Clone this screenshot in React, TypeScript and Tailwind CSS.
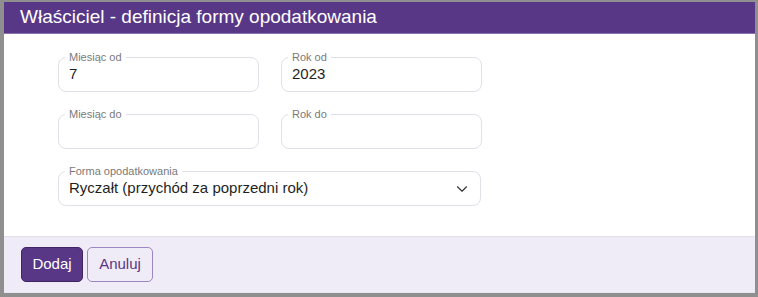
import { ChevronDown } from 'lucide-react';

function Field({ label, value }: { label: string; value?: string }) {
  return (
    <div className="relative h-[35px] w-[201px] rounded-lg border border-[#dfe1e6] bg-white">
      <span className="absolute -top-[8px] left-[6px] bg-white px-[4px] text-[11px] leading-[14px] text-[#7a7a7a]">
        {label}
      </span>
      <div className="flex h-full items-center pl-[10px] text-[15px] text-[#1f1f1f]">{value}</div>
    </div>
  );
}

export default function App() {
  return (
    <div
      className="h-[297px] w-[758px] overflow-hidden bg-[#8f8f8f] pl-[4px] pt-[2px]"
      style={{ fontFamily: '"Liberation Sans", Arial, sans-serif' }}
    >
      <div className="w-[751px] border-b border-[#e9e6ef] bg-white">
        <div className="flex h-[32px] items-center border-b border-[#8a72b0] bg-[#583787] pl-[16px] text-[19px] text-white">
          Właściciel - definicja formy opodatkowania
        </div>

        <div className="flex flex-col gap-[22px] pb-[30px] pl-[54px] pt-[23px]">
          <div className="flex gap-[22px]">
            <Field label="Miesiąc od" value="7" />
            <Field label="Rok od" value="2023" />
          </div>
          <div className="flex gap-[22px]">
            <Field label="Miesiąc do" />
            <Field label="Rok do" />
          </div>
          <div className="relative h-[35px] w-[423px] rounded-lg border border-[#dfe1e6] bg-white">
            <span className="absolute -top-[8px] left-[6px] bg-white px-[4px] text-[11px] leading-[14px] text-[#7a7a7a]">
              Forma opodatkowania
            </span>
            <div className="flex h-full items-center justify-between pl-[10px] pr-[9px] text-[15px] text-[#1f1f1f]">
              <span>Ryczałt (przychód za poprzedni rok)</span>
              <ChevronDown className="h-[18px] w-[18px] text-[#333]" strokeWidth={1.5} />
            </div>
          </div>
        </div>

        <div className="flex h-[56px] items-center gap-[4px] border-t border-[#e4e2e8] bg-[#f0ecf7] pl-[17px]">
          <button className="h-[35px] w-[62px] rounded-[5px] border border-[#3f2466] bg-[#583787] text-[15px] text-white">
            Dodaj
          </button>
          <button className="h-[35px] w-[66px] rounded-[5px] border border-[#9d86c4] bg-transparent text-[15px] text-[#583787]">
            Anuluj
          </button>
        </div>
      </div>
    </div>
  );
}
